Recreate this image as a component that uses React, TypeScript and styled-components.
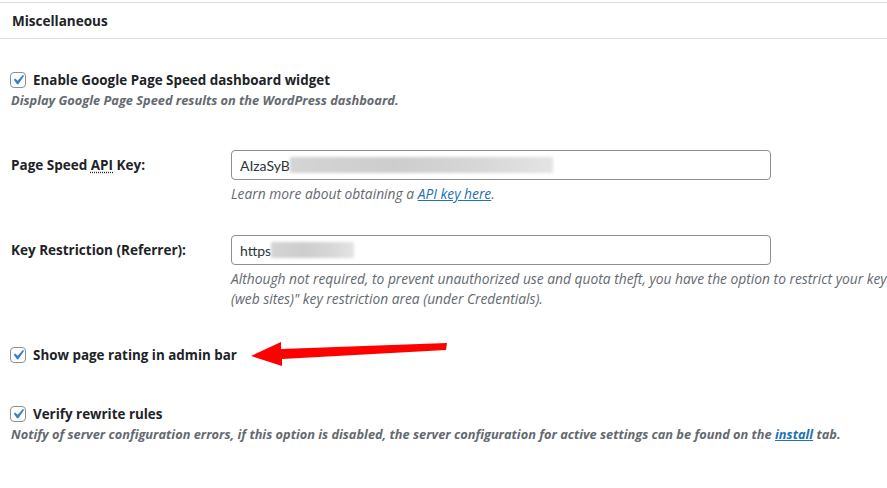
import React from "react";
import styled, { createGlobalStyle } from "styled-components";

const Global = createGlobalStyle`
  html, body { margin: 0; padding: 0; background: #fff; overflow: hidden; }
  body { font-family: "Open Sans", Lato, sans-serif; color: #1d2327; }
`;

const Page = styled.div`
  position: relative;
  width: 1120px;
  padding-top: 2px;
`;

const Box = styled.section`
  border-top: 1px solid #dcdcde;
`;

const Header = styled.h2`
  margin: 0;
  height: 35px;
  padding: 0 12px;
  display: flex;
  align-items: center;
  font-size: 13.5px;
  font-weight: 700;
  border-bottom: 1px solid #dcdcde;
`;

const Body = styled.div`
  display: flex;
  flex-direction: column;
`;

const Row = styled.div<{ $top: number }>`
  padding: ${(p) => p.$top}px 0 0 10px;
`;

const FieldRow = styled.div<{ $top: number }>`
  padding: ${(p) => p.$top}px 0 0 11px;
  display: grid;
  grid-template-columns: 220px 1fr;
  align-items: start;
`;

const CheckLine = styled.label`
  display: flex;
  align-items: center;
  gap: 7px;
  height: 20px;
  font-size: 13.4px;
  font-weight: 700;
`;

const Box16 = styled.span`
  width: 16px;
  height: 16px;
  box-sizing: border-box;
  border: 1px solid #8c8f94;
  border-radius: 4px;
  display: flex;
  align-items: center;
  justify-content: center;
  background: #fff;
  overflow: visible;
`;

const CheckDesc = styled.p`
  margin: 0 0 0 1px;
  line-height: 20px;
  font-size: 12.8px;
  font-style: italic;
  font-weight: 700;
  color: #646970;
`;

const FieldLabel = styled.div`
  height: 30px;
  display: flex;
  align-items: center;
  font-size: 13.5px;
  font-weight: 700;
`;

const Abbr = styled.abbr`
  text-decoration: underline dotted;
  text-underline-offset: 2px;
`;

const Field = styled.div`
  display: flex;
  flex-direction: column;
`;

const Input = styled.div`
  width: 540px;
  height: 30px;
  box-sizing: border-box;
  border: 1px solid #8c8f94;
  border-radius: 4px;
  padding: 0 8px;
  display: flex;
  align-items: center;
  font-family: Lato, sans-serif;
  font-size: 14px;
  color: #2c3338;
  margin-bottom: 4px;
`;

const Blur = styled.span<{ $w: number }>`
  display: inline-block;
  width: ${(p) => p.$w}px;
  height: 16px;
  background: linear-gradient(90deg, #d4d4d4, #cdcdcd 40%, #d6d6d6 70%, #e4e4e4);
  filter: blur(1.5px);
`;

const Help = styled.p`
  margin: 0;
  line-height: 20px;
  font-size: 13.8px;
  font-style: italic;
  color: #646970;
  width: 880px;
`;

const Link = styled.a`
  color: #2271b1;
  text-decoration: underline;
`;

const Arrow = styled.svg`
  position: absolute;
  left: 248px;
  top: 338px;
`;

const CheckIcon = styled.svg`
  margin: -3px;
  flex: none;
`;

function Check() {
  return (
    <Box16>
      <CheckIcon width="20" height="20" viewBox="0 0 20 20">
        <path d="M14.83 4.89l1.34.94-5.81 8.38H9.02L5.78 9.67l1.34-1.25 2.57 2.4z" fill="#3582c4" />
      </CheckIcon>
    </Box16>
  );
}

export default function App() {
  return (
    <>
      <Global />
      <Page>
        <Box>
          <Header>Miscellaneous</Header>
          <Body>
            <Row $top={31}>
              <CheckLine>
                <Check />
                Enable Google Page Speed dashboard widget
              </CheckLine>
              <CheckDesc>Display Google Page Speed results on the WordPress dashboard.</CheckDesc>
            </Row>
            <FieldRow $top={40}>
              <FieldLabel>
                <span>
                  Page Speed <Abbr title="Application Programming Interface">API</Abbr> Key:
                </span>
              </FieldLabel>
              <Field>
                <Input>
                  AIzaSyB
                  <Blur $w={263} />
                </Input>
                <Help>
                  Learn more about obtaining a <Link href="#">API key here</Link>.
                </Help>
              </Field>
            </FieldRow>
            <FieldRow $top={31}>
              <FieldLabel>Key Restriction (Referrer):</FieldLabel>
              <Field>
                <Input>
                  https
                  <Blur $w={83} />
                </Input>
                <Help>
                  Although not required, to prevent unauthorized use and quota theft, you have the option to restrict your key using an "HTTP referrers
                  <br />
                  (web sites)" key restriction area (under Credentials).
                </Help>
              </Field>
            </FieldRow>
            <Row $top={36}>
              <CheckLine>
                <Check />
                Show page rating in admin bar
              </CheckLine>
            </Row>
            <Row $top={39}>
              <CheckLine>
                <Check />
                Verify rewrite rules
              </CheckLine>
              <CheckDesc>
                Notify of server configuration errors, if this option is disabled, the server configuration for active settings can be found on the <Link href="#">install</Link> tab.
              </CheckDesc>
            </Row>
          </Body>
        </Box>
        <Arrow width="204" height="32" viewBox="0 0 204 32">
          <path d="M199 5 L198 12 L34 21 L34 28 L3 18 L33 4 L33 11 Z" fill="#ff0000" />
        </Arrow>
      </Page>
    </>
  );
}
